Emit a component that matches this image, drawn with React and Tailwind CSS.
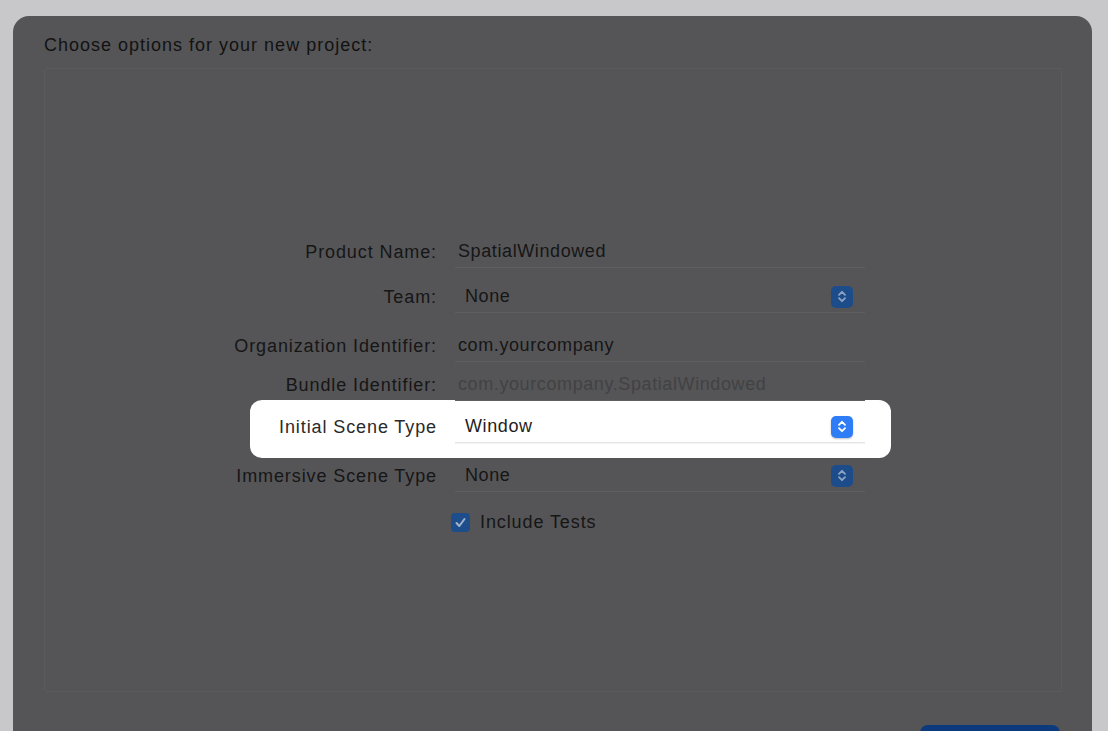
import React from "react";

const Stepper = ({ bright }) => (
  <div
    className={
      bright
        ? "w-[22px] h-[22px] rounded-[5px] bg-[#2f7df6] flex items-center justify-center shadow-[0_1px_2px_rgba(0,0,0,0.25)]"
        : "w-[22px] h-[22px] rounded-[5px] bg-[#1d4c8a] flex items-center justify-center"
    }
  >
    <svg width="10" height="15" viewBox="0 0 10 15" fill="none" stroke={bright ? "#ffffff" : "#8ea3c4"} strokeWidth="1.8" strokeLinecap="round" strokeLinejoin="round">
      <path d="M2 5.8 L5 2.8 L8 5.8" />
      <path d="M2 9.2 L5 12.2 L8 9.2" />
    </svg>
  </div>
);

const Label = ({ children, w = "w-[392px]", color = "text-[#161616]" }) => (
  <div className={`${w} shrink-0 text-right text-[18px] tracking-[0.9px] ${color}`}>{children}</div>
);

const FieldRow = ({ h, label, value, popup, dim }) => (
  <div className={`flex items-center ${h}`}>
    <Label>{label}</Label>
    <div className="ml-[18px] w-[410px] h-[32px] flex items-center justify-between border-b border-[#5e5e60]">
      <span className={`${popup ? "pl-[10px]" : "pl-[3px]"} text-[18px] tracking-[0.6px] ${dim ? "text-[#424244]" : "text-[#161616]"}`}>{value}</span>
      {popup && (
        <div className="mr-[12px]">
          <Stepper />
        </div>
      )}
    </div>
  </div>
);

export default function App() {
  return (
    <div className="h-[731px] w-[1108px] overflow-hidden bg-[#c8c8ca] pt-[16px] pl-[13px] pr-[16px] font-['Liberation_Sans',Arial,sans-serif]">
      <div className="h-full bg-[#555557] rounded-t-[16px] pl-[31px] pr-[30px] pt-[18px] flex flex-col">
        <div className="h-[22px] leading-[22px] text-[18px] tracking-[1px] text-[#121212]">Choose options for your new project:</div>
        <div className="mt-[12px] h-[624px] shrink-0 border border-[#5b5b5d] rounded-[3px] pt-[163px]">
          <FieldRow h="h-[40px]" label="Product Name:" value="SpatialWindowed" />
          <FieldRow h="h-[50px]" label="Team:" value="None" popup />
          <FieldRow h="h-[48px]" label="Organization Identifier:" value="com.yourcompany" />
          <FieldRow h="h-[30px]" label="Bundle Identifier:" value="com.yourcompany.SpatialWindowed" dim />
          <div className="ml-[205px] w-[641px] h-[58px] bg-white rounded-[12px] flex items-center pb-[4px]">
            <Label w="w-[187px]" color="text-[#2a2a2c]">Initial Scene Type</Label>
            <div className="ml-[18px] w-[410px] h-[32px] flex items-center justify-between border-b border-[#e4e4e7] shadow-[0_1px_1px_rgba(0,0,0,0.04)]">
              <span className="pl-[10px] text-[18px] tracking-[0.6px] text-[#1e1e20]">Window</span>
              <div className="mr-[12px]">
                <Stepper bright />
              </div>
            </div>
          </div>
          <FieldRow h="h-[36px]" label="Immersive Scene Type" value="None" popup />
          <div className="h-[56px] flex items-center">
            <div className="ml-[406px] w-[19px] h-[19px] rounded-[4px] bg-[#1e4d8b] flex items-center justify-center">
              <svg width="13" height="13" viewBox="0 0 13 13" fill="none" stroke="#a3b3cb" strokeWidth="2" strokeLinecap="round" strokeLinejoin="round">
                <path d="M2.5 7 L5.3 10 L10.5 3" />
              </svg>
            </div>
            <span className="ml-[10px] text-[18px] tracking-[0.9px] text-[#161616]">Include Tests</span>
          </div>
        </div>
        <div className="mt-[33px] flex items-start justify-end">
          <div className="w-[140px] h-[20px] rounded-t-[8px] bg-[#0b3b7d] mr-[2px]"></div>
        </div>
      </div>
    </div>
  );
}
